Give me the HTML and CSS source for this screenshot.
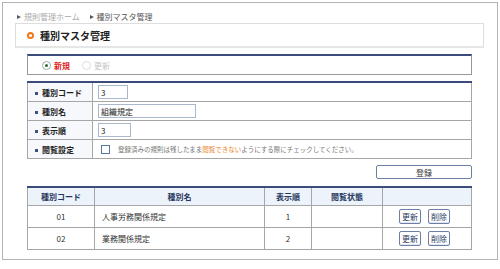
FILE: index.html
```html
<!DOCTYPE html>
<html lang="ja">
<head>
  <meta charset="UTF-8" />
  <title>種別マスタ管理</title>
  <link rel="stylesheet" href="styles.css">
</head>
<body>
  <div class="page">
    <div class="crumbs">
      <span class="crumb">規則管理ホーム</span>
      <span class="crumb current">種別マスタ管理</span>
    </div>

    <div class="title-box">
      <span class="title-icon"></span>
      <h1>種別マスタ管理</h1>
    </div>

    <div class="content">
      <div class="mode-box">
        <label class="mode on"><span class="radio checked"></span>新規</label>
        <label class="mode off"><span class="radio"></span>更新</label>
      </div>

      <table class="form">
        <tr>
          <th><span class="dot"></span>種別コード</th>
          <td><input type="text" class="in-code" value="3" /></td>
        </tr>
        <tr>
          <th><span class="dot"></span>種別名</th>
          <td><input type="text" class="in-name" value="組織規定" /></td>
        </tr>
        <tr>
          <th><span class="dot"></span>表示順</th>
          <td><input type="text" class="in-order" value="3" /></td>
        </tr>
        <tr>
          <th><span class="dot"></span>閲覧設定</th>
          <td class="note"><span class="check"></span>登録済みの規則は残したまま<span class="warn">閲覧できない</span>ようにする際にチェックしてください。</td>
        </tr>
      </table>

      <div class="actions">
        <button class="btn-save">登録</button>
      </div>

      <table class="list">
        <tr>
          <th class="c-code">種別コード</th>
          <th>種別名</th>
          <th class="c-order">表示順</th>
          <th class="c-state">閲覧状態</th>
          <th class="c-ops"></th>
        </tr>
        <tr>
          <td class="center">01</td>
          <td>人事労務関係規定</td>
          <td class="center">1</td>
          <td></td>
          <td class="ops"><button class="btn-sm">更新</button><button class="btn-sm">削除</button></td>
        </tr>
        <tr>
          <td class="center">02</td>
          <td>業務関係規定</td>
          <td class="center">2</td>
          <td></td>
          <td class="ops"><button class="btn-sm">更新</button><button class="btn-sm">削除</button></td>
        </tr>
      </table>
    </div>
  </div>
</body>
</html>
```

FILE: styles.css
```css
body {
  margin: 0;
  font-family: "Noto Sans CJK JP", "Noto Sans", sans-serif;
  font-size: 8px;
  color: #333;
  background: #fff;
}

.page {
  margin: 2px 2px 0 2px;
  height: 256px;
  border: 1px solid #b4b4b4;
}

/* breadcrumb */
.crumbs {
  padding: 8px 0 0 14px;
  height: 12px;
  line-height: 12px;
}

.crumb {
  color: #aaa;
  margin-right: 8px;
}

.crumb::before {
  content: "";
  display: inline-block;
  border-left: 4px solid #555;
  border-top: 2.5px solid transparent;
  border-bottom: 2.5px solid transparent;
  margin-right: 3px;
  vertical-align: 1px;
}

.crumb.current {
  color: #555;
}

/* title */
.title-box {
  margin: 0 13px 0 12px;
  height: 22px;
  border: 1px solid #dedede;
  border-bottom-width: 2px;
  border-bottom-color: #e6e6e6;
  display: flex;
  align-items: center;
  padding-left: 11px;
}

.title-icon {
  width: 3px;
  height: 3px;
  border: 2px solid #f07a18;
  border-radius: 50%;
  margin-right: 6px;
}

h1 {
  margin: 0;
  font-size: 10px;
  font-weight: bold;
  color: #222;
}

.content {
  margin: 0 25px 0 24px;
}

/* new / update switch */
.mode-box {
  margin-top: 6px;
  height: 18px;
  border: 1px solid #999;
  border-top: 2px solid #3b4c7c;
  display: flex;
  align-items: center;
  padding-left: 14px;
  gap: 12px;
}

.mode {
  display: flex;
  align-items: center;
  font-weight: bold;
}

.mode.on {
  color: #e01818;
}

.mode.off {
  color: #c4c4c4;
  font-weight: normal;
}

.radio {
  width: 7px;
  height: 7px;
  border: 1px solid #9aa;
  border-radius: 50%;
  margin-right: 3px;
  position: relative;
  background: #fff;
}

.mode.off .radio {
  border-color: #ddd;
}

.radio.checked::after {
  content: "";
  position: absolute;
  left: 2px;
  top: 2px;
  width: 3px;
  height: 3px;
  border-radius: 50%;
  background: #2d6a2d;
}

/* form table */
.form {
  width: 100%;
  margin-top: 6px;
  border-collapse: collapse;
  border-top: 2px solid #3b4c7c;
}

.form th,
.form td {
  height: 18px;
  padding: 0;
  border: 1px solid #a6a6a6;
}

.form th {
  width: 57px;
  text-align: left;
  padding-left: 7px;
  font-weight: bold;
  color: #222;
  background: #f6f8fb;
  white-space: nowrap;
}

.dot {
  display: inline-block;
  width: 3px;
  height: 3px;
  background: #40507e;
  margin-right: 4px;
  vertical-align: 1px;
}

.form td {
  padding-left: 5px;
}

.form input {
  height: 12px;
  padding: 0 2px;
  font: inherit;
  color: #222;
  border: 1px solid #a9b8cc;
  box-sizing: content-box;
  display: block;
}

.in-code { width: 24px; }
.in-name { width: 92px; }
.in-order { width: 27px; }

.note {
  font-size: 6.5px;
  color: #777;
}

.check {
  display: inline-block;
  width: 7px;
  height: 7px;
  border: 1px solid #5a74a8;
  margin: 0 8px 0 3px;
  vertical-align: -2px;
}

.warn {
  color: #e8842a;
}

/* save button */
.actions {
  margin-top: 6px;
  display: flex;
  justify-content: flex-end;
}

.btn-save {
  width: 96px;
  height: 14px;
  padding: 0;
  font: inherit;
  color: #333;
  background: #fff;
  border: 1px solid #6d7fa6;
  border-radius: 2px;
}

/* list */
.list {
  width: 100%;
  margin-top: 7px;
  border-collapse: collapse;
  border-top: 2px solid #3b4c7c;
}

.list th,
.list td {
  height: 21px;
  padding: 0 7px;
  border: 1px solid #a6a6a6;
}

.list th {
  height: 17px;
  background: #edf3fa;
  color: #24365e;
  font-weight: bold;
}

.list .c-code { width: 52px; }
.list .c-order { width: 32px; }
.list .c-state { width: 56px; }
.list .c-ops { width: 74px; }

.center {
  text-align: center;
}

.list td.ops {
  padding: 0 0 0 16px;
}

.btn-sm {
  width: 22px;
  height: 15px;
  padding: 0;
  margin-right: 7px;
  font: inherit;
  color: #2b3a5e;
  background: #fff;
  border: 1px solid #6d7fa6;
  border-radius: 2px;
  box-shadow: inset 0 -1px 0 #dfe6f0;
}
```
